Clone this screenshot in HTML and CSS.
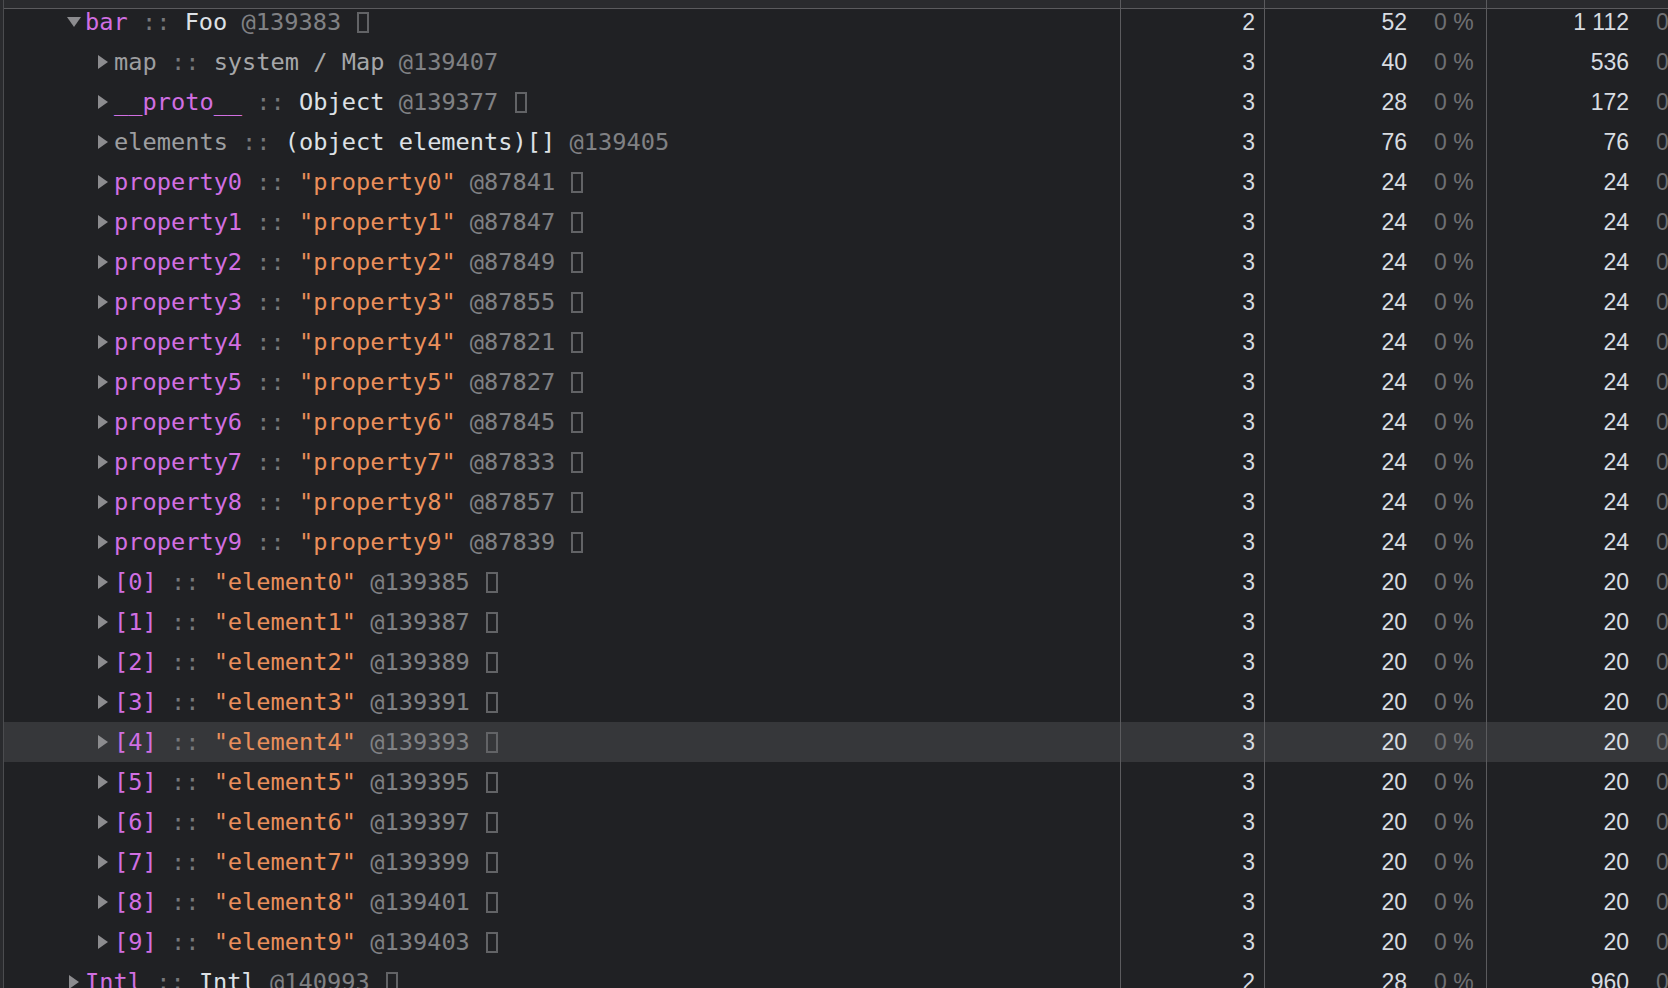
FILE: index.html
```html
<!DOCTYPE html>
<html>
<head>
<meta charset="utf-8">
<link rel="stylesheet" href="styles.css">
</head>
<body>
<div class="table">
  <div class="header">
    <div class="cell tree"></div><div class="cell count"></div><div class="cell size"></div><div class="cell ret"></div>
  </div>
  <div class="rows">
    <div class="row"><div class="cell tree l1"><svg class="tw" viewBox="0 0 14 14"><polygon points="0,2 14,2 7,12"/></svg><span class="line"><span class="nm">bar</span> <span class="sep">::</span> <span class="ty">Foo</span> <span class="id">@139383</span> <span class="box"></span></span></div><div class="cell count">2</div><div class="cell size"><span class="num">52</span><span class="pct">0 %</span></div><div class="cell ret"><span class="num">1 112</span><span class="pct">0 %</span></div></div>

    <div class="row"><div class="cell tree l2"><svg class="tw" viewBox="0 0 14 14"><polygon points="2,0 12,7 2,14"/></svg><span class="line"><span class="gn">map</span> <span class="sep">::</span> <span class="gt">system / Map</span> <span class="id">@139407</span></span></div><div class="cell count">3</div><div class="cell size"><span class="num">40</span><span class="pct">0 %</span></div><div class="cell ret"><span class="num">536</span><span class="pct">0 %</span></div></div>

    <div class="row"><div class="cell tree l2"><svg class="tw" viewBox="0 0 14 14"><polygon points="2,0 12,7 2,14"/></svg><span class="line"><span class="nm">__proto__</span> <span class="sep">::</span> <span class="ty">Object</span> <span class="id">@139377</span> <span class="box"></span></span></div><div class="cell count">3</div><div class="cell size"><span class="num">28</span><span class="pct">0 %</span></div><div class="cell ret"><span class="num">172</span><span class="pct">0 %</span></div></div>

    <div class="row"><div class="cell tree l2"><svg class="tw" viewBox="0 0 14 14"><polygon points="2,0 12,7 2,14"/></svg><span class="line"><span class="gn">elements</span> <span class="sep">::</span> <span class="ty">(object elements)[]</span> <span class="id">@139405</span></span></div><div class="cell count">3</div><div class="cell size"><span class="num">76</span><span class="pct">0 %</span></div><div class="cell ret"><span class="num">76</span><span class="pct">0 %</span></div></div>

    <div class="row"><div class="cell tree l2"><svg class="tw" viewBox="0 0 14 14"><polygon points="2,0 12,7 2,14"/></svg><span class="line"><span class="nm">property0</span> <span class="sep">::</span> <span class="st">"property0"</span> <span class="id">@87841</span> <span class="box"></span></span></div><div class="cell count">3</div><div class="cell size"><span class="num">24</span><span class="pct">0 %</span></div><div class="cell ret"><span class="num">24</span><span class="pct">0 %</span></div></div>

    <div class="row"><div class="cell tree l2"><svg class="tw" viewBox="0 0 14 14"><polygon points="2,0 12,7 2,14"/></svg><span class="line"><span class="nm">property1</span> <span class="sep">::</span> <span class="st">"property1"</span> <span class="id">@87847</span> <span class="box"></span></span></div><div class="cell count">3</div><div class="cell size"><span class="num">24</span><span class="pct">0 %</span></div><div class="cell ret"><span class="num">24</span><span class="pct">0 %</span></div></div>

    <div class="row"><div class="cell tree l2"><svg class="tw" viewBox="0 0 14 14"><polygon points="2,0 12,7 2,14"/></svg><span class="line"><span class="nm">property2</span> <span class="sep">::</span> <span class="st">"property2"</span> <span class="id">@87849</span> <span class="box"></span></span></div><div class="cell count">3</div><div class="cell size"><span class="num">24</span><span class="pct">0 %</span></div><div class="cell ret"><span class="num">24</span><span class="pct">0 %</span></div></div>

    <div class="row"><div class="cell tree l2"><svg class="tw" viewBox="0 0 14 14"><polygon points="2,0 12,7 2,14"/></svg><span class="line"><span class="nm">property3</span> <span class="sep">::</span> <span class="st">"property3"</span> <span class="id">@87855</span> <span class="box"></span></span></div><div class="cell count">3</div><div class="cell size"><span class="num">24</span><span class="pct">0 %</span></div><div class="cell ret"><span class="num">24</span><span class="pct">0 %</span></div></div>

    <div class="row"><div class="cell tree l2"><svg class="tw" viewBox="0 0 14 14"><polygon points="2,0 12,7 2,14"/></svg><span class="line"><span class="nm">property4</span> <span class="sep">::</span> <span class="st">"property4"</span> <span class="id">@87821</span> <span class="box"></span></span></div><div class="cell count">3</div><div class="cell size"><span class="num">24</span><span class="pct">0 %</span></div><div class="cell ret"><span class="num">24</span><span class="pct">0 %</span></div></div>

    <div class="row"><div class="cell tree l2"><svg class="tw" viewBox="0 0 14 14"><polygon points="2,0 12,7 2,14"/></svg><span class="line"><span class="nm">property5</span> <span class="sep">::</span> <span class="st">"property5"</span> <span class="id">@87827</span> <span class="box"></span></span></div><div class="cell count">3</div><div class="cell size"><span class="num">24</span><span class="pct">0 %</span></div><div class="cell ret"><span class="num">24</span><span class="pct">0 %</span></div></div>

    <div class="row"><div class="cell tree l2"><svg class="tw" viewBox="0 0 14 14"><polygon points="2,0 12,7 2,14"/></svg><span class="line"><span class="nm">property6</span> <span class="sep">::</span> <span class="st">"property6"</span> <span class="id">@87845</span> <span class="box"></span></span></div><div class="cell count">3</div><div class="cell size"><span class="num">24</span><span class="pct">0 %</span></div><div class="cell ret"><span class="num">24</span><span class="pct">0 %</span></div></div>

    <div class="row"><div class="cell tree l2"><svg class="tw" viewBox="0 0 14 14"><polygon points="2,0 12,7 2,14"/></svg><span class="line"><span class="nm">property7</span> <span class="sep">::</span> <span class="st">"property7"</span> <span class="id">@87833</span> <span class="box"></span></span></div><div class="cell count">3</div><div class="cell size"><span class="num">24</span><span class="pct">0 %</span></div><div class="cell ret"><span class="num">24</span><span class="pct">0 %</span></div></div>

    <div class="row"><div class="cell tree l2"><svg class="tw" viewBox="0 0 14 14"><polygon points="2,0 12,7 2,14"/></svg><span class="line"><span class="nm">property8</span> <span class="sep">::</span> <span class="st">"property8"</span> <span class="id">@87857</span> <span class="box"></span></span></div><div class="cell count">3</div><div class="cell size"><span class="num">24</span><span class="pct">0 %</span></div><div class="cell ret"><span class="num">24</span><span class="pct">0 %</span></div></div>

    <div class="row"><div class="cell tree l2"><svg class="tw" viewBox="0 0 14 14"><polygon points="2,0 12,7 2,14"/></svg><span class="line"><span class="nm">property9</span> <span class="sep">::</span> <span class="st">"property9"</span> <span class="id">@87839</span> <span class="box"></span></span></div><div class="cell count">3</div><div class="cell size"><span class="num">24</span><span class="pct">0 %</span></div><div class="cell ret"><span class="num">24</span><span class="pct">0 %</span></div></div>

    <div class="row"><div class="cell tree l2"><svg class="tw" viewBox="0 0 14 14"><polygon points="2,0 12,7 2,14"/></svg><span class="line"><span class="nm">[0]</span> <span class="sep">::</span> <span class="st">"element0"</span> <span class="id">@139385</span> <span class="box"></span></span></div><div class="cell count">3</div><div class="cell size"><span class="num">20</span><span class="pct">0 %</span></div><div class="cell ret"><span class="num">20</span><span class="pct">0 %</span></div></div>

    <div class="row"><div class="cell tree l2"><svg class="tw" viewBox="0 0 14 14"><polygon points="2,0 12,7 2,14"/></svg><span class="line"><span class="nm">[1]</span> <span class="sep">::</span> <span class="st">"element1"</span> <span class="id">@139387</span> <span class="box"></span></span></div><div class="cell count">3</div><div class="cell size"><span class="num">20</span><span class="pct">0 %</span></div><div class="cell ret"><span class="num">20</span><span class="pct">0 %</span></div></div>

    <div class="row"><div class="cell tree l2"><svg class="tw" viewBox="0 0 14 14"><polygon points="2,0 12,7 2,14"/></svg><span class="line"><span class="nm">[2]</span> <span class="sep">::</span> <span class="st">"element2"</span> <span class="id">@139389</span> <span class="box"></span></span></div><div class="cell count">3</div><div class="cell size"><span class="num">20</span><span class="pct">0 %</span></div><div class="cell ret"><span class="num">20</span><span class="pct">0 %</span></div></div>

    <div class="row"><div class="cell tree l2"><svg class="tw" viewBox="0 0 14 14"><polygon points="2,0 12,7 2,14"/></svg><span class="line"><span class="nm">[3]</span> <span class="sep">::</span> <span class="st">"element3"</span> <span class="id">@139391</span> <span class="box"></span></span></div><div class="cell count">3</div><div class="cell size"><span class="num">20</span><span class="pct">0 %</span></div><div class="cell ret"><span class="num">20</span><span class="pct">0 %</span></div></div>

    <div class="row selected"><div class="cell tree l2"><svg class="tw" viewBox="0 0 14 14"><polygon points="2,0 12,7 2,14"/></svg><span class="line"><span class="nm">[4]</span> <span class="sep">::</span> <span class="st">"element4"</span> <span class="id">@139393</span> <span class="box"></span></span></div><div class="cell count">3</div><div class="cell size"><span class="num">20</span><span class="pct">0 %</span></div><div class="cell ret"><span class="num">20</span><span class="pct">0 %</span></div></div>

    <div class="row"><div class="cell tree l2"><svg class="tw" viewBox="0 0 14 14"><polygon points="2,0 12,7 2,14"/></svg><span class="line"><span class="nm">[5]</span> <span class="sep">::</span> <span class="st">"element5"</span> <span class="id">@139395</span> <span class="box"></span></span></div><div class="cell count">3</div><div class="cell size"><span class="num">20</span><span class="pct">0 %</span></div><div class="cell ret"><span class="num">20</span><span class="pct">0 %</span></div></div>

    <div class="row"><div class="cell tree l2"><svg class="tw" viewBox="0 0 14 14"><polygon points="2,0 12,7 2,14"/></svg><span class="line"><span class="nm">[6]</span> <span class="sep">::</span> <span class="st">"element6"</span> <span class="id">@139397</span> <span class="box"></span></span></div><div class="cell count">3</div><div class="cell size"><span class="num">20</span><span class="pct">0 %</span></div><div class="cell ret"><span class="num">20</span><span class="pct">0 %</span></div></div>

    <div class="row"><div class="cell tree l2"><svg class="tw" viewBox="0 0 14 14"><polygon points="2,0 12,7 2,14"/></svg><span class="line"><span class="nm">[7]</span> <span class="sep">::</span> <span class="st">"element7"</span> <span class="id">@139399</span> <span class="box"></span></span></div><div class="cell count">3</div><div class="cell size"><span class="num">20</span><span class="pct">0 %</span></div><div class="cell ret"><span class="num">20</span><span class="pct">0 %</span></div></div>

    <div class="row"><div class="cell tree l2"><svg class="tw" viewBox="0 0 14 14"><polygon points="2,0 12,7 2,14"/></svg><span class="line"><span class="nm">[8]</span> <span class="sep">::</span> <span class="st">"element8"</span> <span class="id">@139401</span> <span class="box"></span></span></div><div class="cell count">3</div><div class="cell size"><span class="num">20</span><span class="pct">0 %</span></div><div class="cell ret"><span class="num">20</span><span class="pct">0 %</span></div></div>

    <div class="row"><div class="cell tree l2"><svg class="tw" viewBox="0 0 14 14"><polygon points="2,0 12,7 2,14"/></svg><span class="line"><span class="nm">[9]</span> <span class="sep">::</span> <span class="st">"element9"</span> <span class="id">@139403</span> <span class="box"></span></span></div><div class="cell count">3</div><div class="cell size"><span class="num">20</span><span class="pct">0 %</span></div><div class="cell ret"><span class="num">20</span><span class="pct">0 %</span></div></div>

    <div class="row"><div class="cell tree l1"><svg class="tw" viewBox="0 0 14 14"><polygon points="2,0 12,7 2,14"/></svg><span class="line"><span class="nm">Intl</span> <span class="sep">::</span> <span class="ty">Intl</span> <span class="id">@140993</span> <span class="box"></span></span></div><div class="cell count">2</div><div class="cell size"><span class="num">28</span><span class="pct">0 %</span></div><div class="cell ret"><span class="num">960</span><span class="pct">0 %</span></div></div>
  </div>
</div>
</body>
</html>
```

FILE: styles.css
```css
html, body {
  margin: 0;
  padding: 0;
  background: #2a2b2e;
  height: 100%;
  overflow: hidden;
}

.table {
  position: relative;
  margin-left: 3px;
  border-left: 1px solid #4b4c4f;
  background: #202124;
  height: 100%;
  overflow: hidden;
}

.header {
  position: absolute;
  top: 0;
  left: 0;
  right: 0;
  height: 8px;
  display: grid;
  grid-template-columns: 1117px 144px 222px 222px;
  background: #2a2b2e;
  border-bottom: 1px solid #5b5b5e;
  z-index: 2;
}

.rows {
  padding-top: 2px;
}

.row {
  display: grid;
  grid-template-columns: 1117px 144px 222px 222px;
  height: 40px;
  line-height: 40px;
}

.row.selected {
  background: #36373a;
}

.cell {
  box-sizing: border-box;
  border-right: 1px solid #5b5b5e;
  white-space: nowrap;
  overflow: hidden;
}

.tree {
  font-family: "DejaVu Sans Mono", monospace;
  font-size: 23.65px;
  color: #dde1e6;
}

.tree.l1 { padding-left: 63px; }
.tree.l2 { padding-left: 92px; }

.tw {
  display: inline-block;
  width: 14px;
  height: 14px;
  margin-right: 4px;
  vertical-align: middle;
  position: relative;
  top: -2px;
  fill: #8c8c8f;
}

.line { white-space: pre; }

.nm { color: #d16fe2; }
.gn { color: #9d9ea0; }
.gt { color: #a6a7a9; }
.sep { color: #76777a; }
.ty { color: #dde1e6; }
.st { color: #ea8f5b; }
.id { color: #808184; }

.box {
  display: inline-block;
  box-sizing: border-box;
  width: 12px;
  height: 21px;
  border: 2px solid #626366;
  margin-left: 2px;
  vertical-align: -3px;
}

.count, .size, .ret {
  font-family: "Liberation Sans", Arial, sans-serif;
  font-size: 23px;
  color: #d8dce1;
}

.count {
  text-align: right;
  padding-right: 9px;
}

.size, .ret {
  display: flex;
  justify-content: flex-end;
  padding-right: 10px;
}

.num {
  text-align: right;
}

.pct {
  width: 42px;
  margin-left: 27px;
  color: #6e6f72;
  white-space: pre;
}
```
